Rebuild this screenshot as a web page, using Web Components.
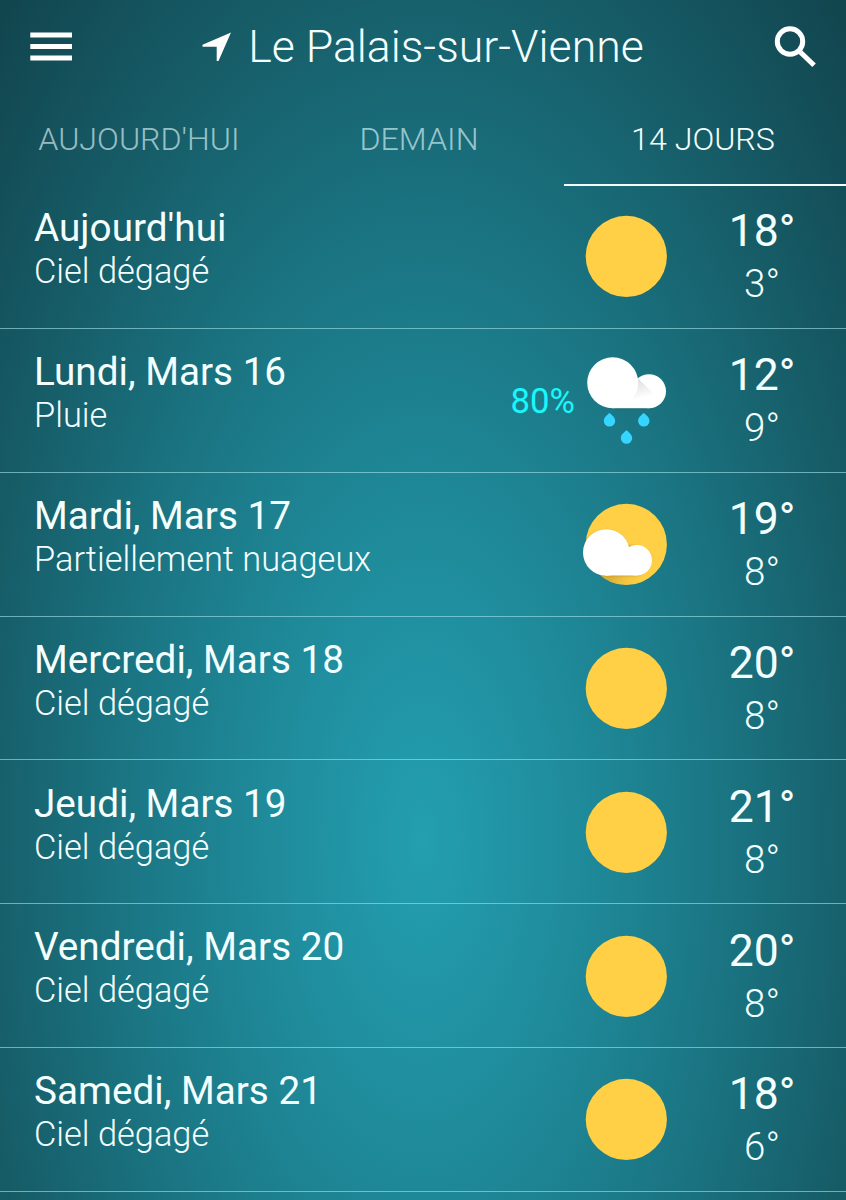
<!DOCTYPE html>
<html lang="fr">

    <head>
        <meta charset="utf-8">
        <title>Le Palais-sur-Vienne</title>
        <style>
            body {
                margin: 0;
                width: 846px;
                height: 1200px;
                overflow: hidden;
                font-family: Roboto, "Liberation Sans", sans-serif;
                color: #f4ffff;
                background: radial-gradient(ellipse 590px 1170px at 423px 840px, #239fb0 0%, #1f8c9c 25%, #1b7684 50%, #165d68 75%, #12464f 100%);
            }
        </style>
    </head>

    <body>
        <app-bar>Le Palais-sur-Vienne</app-bar>
        <tab-bar>
            <tab-item>AUJOURD'HUI</tab-item>
            <tab-item style="--shift: 8px">DEMAIN</tab-item>
            <tab-item active>14 JOURS</tab-item>
        </tab-bar>
        <main>
            <day-row icon="sun" high="18°" low="3°">Aujourd'hui<span slot="sky">Ciel dégagé</span></day-row>
            <day-row icon="rain" high="12°" low="9°" rain="80%">Lundi, Mars 16<span slot="sky">Pluie</span></day-row>
            <day-row icon="partly" high="19°" low="8°">Mardi, Mars 17<span slot="sky">Partiellement nuageux</span></day-row>
            <day-row icon="sun" high="20°" low="8°">Mercredi, Mars 18<span slot="sky">Ciel dégagé</span></day-row>
            <day-row icon="sun" high="21°" low="8°">Jeudi, Mars 19<span slot="sky">Ciel dégagé</span></day-row>
            <day-row icon="sun" high="20°" low="8°">Vendredi, Mars 20<span slot="sky">Ciel dégagé</span></day-row>
            <day-row icon="sun" high="18°" low="6°">Samedi, Mars 21<span slot="sky">Ciel dégagé</span></day-row>
        </main>
    </body>

    <template id="app-bar">
        <style>
            :host { display: flex; align-items: center; justify-content: space-between; height: 93px; padding: 0 30px; }
            svg { display: block; fill: #fff; }
            .place { display: flex; align-items: center; gap: 17px; }
            .name { font-size: 44.600px; font-weight: 300; line-height: 60px; white-space: nowrap; }
        </style>
        <svg width="42" height="30" viewBox="0 0 42 30"><path d="M.3 .5h41.700v5H.3zM.3 12h41.700v5H.3zM.3 23.500h41.700v5H.3z"/></svg>
        <div class="place">
            <svg width="29" height="30" viewBox="0 0 29 30"><path d="M29 0.500 16.500 29h-1.800V14.800H.5V12.800z"/></svg>
            <div class="name"><slot></slot></div>
        </div>
        <svg width="42" height="42" viewBox="0 0 42 42">
            <circle cx="16" cy="15.500" r="12.700" fill="none" stroke="#fff" stroke-width="5"/>
            <path d="M24.500 27.700 28 24.200 41.800 37.500 38.300 41z"/>
        </svg>
    </template>

    <template id="tab-bar">
        <style>
            :host { display: grid; grid-template-columns: 1fr 1fr 1fr; height: 92px; }
        </style>
        <slot></slot>
    </template>

    <template id="tab-item">
        <style>
            :host {
                display: flex; align-items: center; justify-content: center; box-sizing: border-box;
                height: 93px; padding: 0 var(--shift, 4px) 0 0; border-bottom: 2px solid transparent;
                font-size: 32.200px; font-weight: 300; white-space: nowrap;
                color: rgba(225, 250, 253, 0.65);
            }
            :host([active]) { color: #f4ffff; border-color: #f4ffff; }
        </style>
        <slot></slot>
    </template>

    <template id="day-row">
        <style>
            :host {
                display: grid; grid-template-columns: 470px 111px 90px 90px; align-items: center; box-sizing: border-box;
                height: 143.850px; border-bottom: 1px solid rgba(155, 220, 227, 0.65);
            }
            .text { padding: 0 0 13.500px 34px; white-space: nowrap; }
            .day { font-size: 38.700px; line-height: 44px; }
            .sky { font-size: 34.400px; font-weight: 300; line-height: 43px; }
            .rain { font-size: 34.700px; color: #18f8fa; text-align: right; padding: 1px 6px 0 0; }
            .temps { text-align: center; width: 182px; padding-top: 1px; }
            .high { font-size: 44.500px; line-height: 54px; }
            .low { font-size: 38.500px; font-weight: 300; line-height: 51px; }
        </style>
        <div class="text">
            <div class="day"><slot></slot></div>
            <div class="sky"><slot name="sky"></slot></div>
        </div>
        <div class="rain"></div>
        <weather-icon></weather-icon>
        <div class="temps">
            <div class="high"></div>
            <div class="low"></div>
        </div>
    </template>

    <script>
        function attach(el, id) {
            let t = document.querySelector('#' + id);
            let root = el.attachShadow({mode: 'open'});
            root.appendChild(document.importNode(t.content, true));
            return root;
        }

        const icons = {
            sun: `<circle cx="45.300" cy="45.400" r="40.600" fill="#ffd045"/>`,
            rain: `
                <defs><linearGradient id="shade" gradientUnits="userSpaceOnUse" x1="56" y1="24" x2="61" y2="43">
                    <stop offset="0" stop-color="#dedede"/><stop offset="1" stop-color="#fff"/>
                </linearGradient></defs>
                <g transform="translate(0 .5)">
                    <path d="M31.700 40H68v13.700H31.700z" fill="#0c4c56" opacity=".35"/>
                    <path d="M31.700 35.800H68v17H31.700z" fill="#fff"/>
                    <circle cx="68" cy="35.800" r="17" fill="#fff"/>
                    <path d="M56 22 72 37.500 63 47H50z" fill="url(#shade)"/>
                    <circle cx="31.700" cy="27.300" r="25.500" fill="#fff"/>
                </g>
                <g fill="#35d5ff">
                    <path id="drop" d="M28.500 58c2.800 2.300 5.700 4.700 5.700 7.900a5.700 5.700 0 0 1-11.400 0c0-3.200 2.900-5.600 5.700-7.900z"/>
                    <use href="#drop" x="34.300"/>
                    <use href="#drop" x="17" y="17.200"/>
                </g>`,
            partly: `
                <defs>
                    <clipPath id="disc"><circle cx="45.300" cy="45.400" r="40.600"/></clipPath>
                    <filter id="soft"><feGaussianBlur stdDeviation="1"/></filter>
                    <linearGradient id="cast" gradientUnits="userSpaceOnUse" x1="35" y1="70" x2="66" y2="88">
                        <stop offset="0" stop-color="#a87e20" stop-opacity=".4"/><stop offset="1" stop-color="#ffd045" stop-opacity="0"/>
                    </linearGradient>
                </defs>
                <circle cx="45.300" cy="45.400" r="40.600" fill="#ffd045"/>
                <g clip-path="url(#disc)">
                    <path d="M10 70 67 50 90 73 60 98 20 92z" fill="url(#cast)"/>
                    <path d="M25 77a23 23 0 1 1 20.500-33.500V47a15.300 15.300 0 1 1 10.800 30z" fill="#9b761f" opacity=".45" filter="url(#soft)"/>
                </g>
                <circle cx="25.300" cy="53.500" r="23.300" fill="#fff"/>
                <circle cx="55.800" cy="61.300" r="15.200" fill="#fff"/>
                <path d="M25 50H46L55.800 61V76.500H25z" fill="#fff"/>`
        };

        customElements.define('weather-icon', class extends HTMLElement {
            constructor() {
                super();
                this.attachShadow({mode: 'open'});
            }
            static get observedAttributes() { return ['name']; }
            attributeChangedCallback(attr, old, name) {
                this.shadowRoot.innerHTML = `
                    <style>:host { display: block; } svg { display: block; overflow: visible; }</style>
                    <svg width="90" height="90" viewBox="0 0 90 90">${icons[name]}</svg>`;
            }
        });

        for (let name of ['app-bar', 'tab-bar', 'tab-item']) {
            customElements.define(name, class extends HTMLElement {
                constructor() {
                    super();
                    attach(this, name);
                }
            });
        }

        customElements.define('day-row', class extends HTMLElement {
            constructor() {
                super();
                let root = attach(this, 'day-row');
                for (let key of ['high', 'low', 'rain']) {
                    root.querySelector('.' + key).textContent = this.getAttribute(key) || '';
                }
                root.querySelector('weather-icon').setAttribute('name', this.getAttribute('icon'));
            }
        });
    </script>

</html>
